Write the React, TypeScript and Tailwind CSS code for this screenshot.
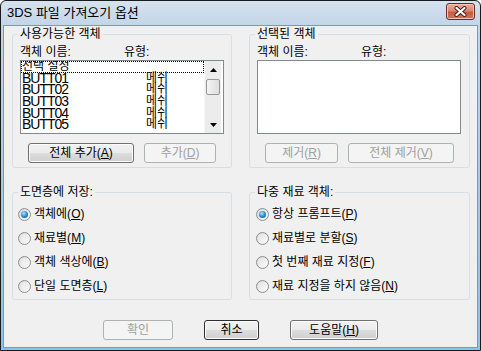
import React from "react";

function Mn({ c }: { c: string }) {
  return <span className="underline underline-offset-[1px]">{c}</span>;
}

function Btn({
  className,
  disabled,
  isDefault,
  children,
}: {
  className: string;
  disabled?: boolean;
  isDefault?: boolean;
  children: React.ReactNode;
}) {
  const look = disabled
    ? "border-[#adb2b5] bg-[#f4f4f4] text-[#a0a0a0]"
    : isDefault
      ? "border-[#2f2f2f] bg-[linear-gradient(#f2f2f2_0%,#ebebeb_50%,#dddddd_50%,#cfcfcf_100%)] text-black shadow-[inset_0_0_0_1px_#fcfcfc]"
      : "border-[#707070] bg-[linear-gradient(#f2f2f2_0%,#ebebeb_50%,#dddddd_50%,#cfcfcf_100%)] text-black shadow-[inset_0_0_0_1px_#fcfcfc]";
  return (
    <div
      className={`h-[20px] flex items-center justify-center rounded-[3px] border text-[12px] leading-[14px] whitespace-nowrap ${look} ${className}`}
    >
      {children}
    </div>
  );
}

function Radio({ on, children }: { on?: boolean; children: React.ReactNode }) {
  return (
    <div className="h-[24px] flex items-center gap-[3px]">
      <span className="w-[13px] h-[13px] rounded-full border border-[#8e8f8f] bg-[linear-gradient(135deg,#d6d6d6,#fdfdfd)] flex items-center justify-center">
        {on ? (
          <span className="w-[7px] h-[7px] rounded-full bg-[radial-gradient(circle_at_40%_35%,#b6e6fb,#2a8ad4_50%,#0f4c8c)]" />
        ) : (
          <span className="w-[9px] h-[9px] rounded-full bg-[linear-gradient(135deg,#e4e4e4,#f9f9f9)]" />
        )}
      </span>
      <span className="text-[12px] leading-[14px] whitespace-nowrap">{children}</span>
    </div>
  );
}

function Arrow({ up }: { up?: boolean }) {
  return (
    <div className="h-[17px] flex items-center justify-center">
      <svg width="7" height="4" viewBox="0 0 7 4">
        {up ? <path d="M3.5 0L7 4H0z" fill="#000" /> : <path d="M0 0h7L3.5 4z" fill="#000" />}
      </svg>
    </div>
  );
}

const items = ["BUTT01", "BUTT02", "BUTT03", "BUTT04", "BUTT05"];

export default function App() {
  return (
    <div className="w-[481px] h-[351px] border border-[#1b1b1b] rounded-t-[6px] bg-[linear-gradient(#d6e2ef_0px,#c3d5e8_24px,#a9c6e6_60%,#8cc3ea_100%)] flex flex-col font-['Liberation_Sans','Noto_Sans_CJK_KR',sans-serif] text-black select-none">
      {/* title bar */}
      <div className="h-[24px] flex items-center justify-between pl-[6px] pr-[5px]">
        <span className="text-[13px] leading-[16px] text-black">3DS 파일 가져오기 옵션</span>
        <div className="w-[29px] h-[17px] mt-[-3px] rounded-[3px] border border-[#6b2a24] bg-[linear-gradient(#eab1a4_0%,#d98773_45%,#c75a44_55%,#d77259_100%)] shadow-[inset_0_0_0_1px_#f2c2b6] flex items-center justify-center">
          <svg width="13" height="11" viewBox="0 0 13 11">
            <path d="M2.5 2L10.5 9M10.5 2L2.5 9" stroke="#4a1710" strokeWidth="4" strokeLinecap="round" />
            <path d="M2.5 2L10.5 9M10.5 2L2.5 9" stroke="#fff" strokeWidth="2.2" strokeLinecap="round" />
          </svg>
        </div>
      </div>

      {/* client */}
      <div className="flex-1 mx-[2px] mb-[2px] border border-[#7d97b4] bg-[#f0f0f0] pl-[8px] pt-[1px] flex flex-col">
        <div className="flex gap-[17px]">
          <fieldset className="w-[220px] border border-[#d5dfe5] rounded-[3px] pb-[4px]">
            <legend className="ml-[5px] px-[2px] text-[12px] leading-[14px]">사용가능한 객체</legend>
            <div className="mt-[4px] pl-[7px] grid grid-cols-[104px_1fr] text-[12px] leading-[14px]">
              <span>객체 이름:</span>
              <span>유형:</span>
            </div>
            <div className="mt-[1px] mx-[7px] h-[74px] border border-[#828790] bg-white flex">
              <div className="w-[183px] overflow-hidden">
                <div className="h-[11.7px] outline outline-1 outline-dotted outline-black -outline-offset-1 pl-[1px] overflow-hidden text-[12px] leading-[10px] whitespace-nowrap">
                  선택 설정
                </div>
                {items.map((n) => (
                  <div key={n} className="h-[11.7px] flex whitespace-nowrap">
                    <span className="w-[125px] pl-[1px] text-[14px] leading-[11.7px] tracking-[-1px]">{n}</span>
                    <span className="text-[12px] leading-[11.7px]">메쉬</span>
                  </div>
                ))}
              </div>
              <div className="w-[17px] bg-[#ececec] border-l border-[#f7f7f7] flex flex-col">
                <Arrow up />
                <div className="flex-1 px-[1px] pt-[1px]">
                  <div className="h-[16px] rounded-[2px] border border-[#979797] bg-[linear-gradient(90deg,#f4f4f4,#dedede)]" />
                </div>
                <Arrow />
              </div>
            </div>
            <div className="mt-[9px] flex justify-center gap-[10px]">
              <Btn className="w-[106px]">
                전체 추가(<Mn c="A" />)
              </Btn>
              <Btn className="w-[72px]" disabled>
                추가(<Mn c="D" />)
              </Btn>
            </div>
          </fieldset>

          <fieldset className="w-[221px] border border-[#d5dfe5] rounded-[3px] pb-[4px]">
            <legend className="ml-[5px] px-[2px] text-[12px] leading-[14px]">선택된 객체</legend>
            <div className="mt-[4px] pl-[7px] grid grid-cols-[104px_1fr] text-[12px] leading-[14px]">
              <span>객체 이름:</span>
              <span>유형:</span>
            </div>
            <div className="mt-[1px] ml-[7px] mr-[8px] h-[74px] border border-[#828790] bg-white" />
            <div className="mt-[9px] flex justify-center gap-[10px]">
              <Btn className="w-[73px]" disabled>
                제거(<Mn c="R" />)
              </Btn>
              <Btn className="w-[106px]" disabled>
                전체 제거(<Mn c="V" />)
              </Btn>
            </div>
          </fieldset>
        </div>

        <div className="mt-[17px] flex gap-[17px]">
          <fieldset className="w-[220px] border border-[#d5dfe5] rounded-[3px] pl-[5px] pt-[3px] pb-[1px]">
            <legend className="ml-[0px] px-[2px] text-[12px] leading-[14px]">도면층에 저장:</legend>
            <Radio on>
              객체에(<Mn c="O" />)
            </Radio>
            <Radio>
              재료별(<Mn c="M" />)
            </Radio>
            <Radio>
              객체 색상에(<Mn c="B" />)
            </Radio>
            <Radio>
              단일 도면층(<Mn c="L" />)
            </Radio>
          </fieldset>
          <fieldset className="w-[221px] border border-[#d5dfe5] rounded-[3px] pl-[6px] pt-[3px] pb-[1px]">
            <legend className="ml-[-1px] px-[2px] text-[12px] leading-[14px]">다중 재료 객체:</legend>
            <Radio on>
              항상 프롬프트(<Mn c="P" />)
            </Radio>
            <Radio>
              재료별로 분할(<Mn c="S" />)
            </Radio>
            <Radio>
              첫 번째 재료 지정(<Mn c="F" />)
            </Radio>
            <Radio>
              재료 지정을 하지 않음(<Mn c="N" />)
            </Radio>
          </fieldset>
        </div>

        <div className="mt-[20px] pr-[8px] flex justify-center gap-[31px]">
          <Btn className="w-[70px]" disabled>
            확인
          </Btn>
          <Btn className="w-[55px]" isDefault>
            취소
          </Btn>
          <Btn className="w-[88px]">
            도움말(<Mn c="H" />)
          </Btn>
        </div>
      </div>
    </div>
  );
}
